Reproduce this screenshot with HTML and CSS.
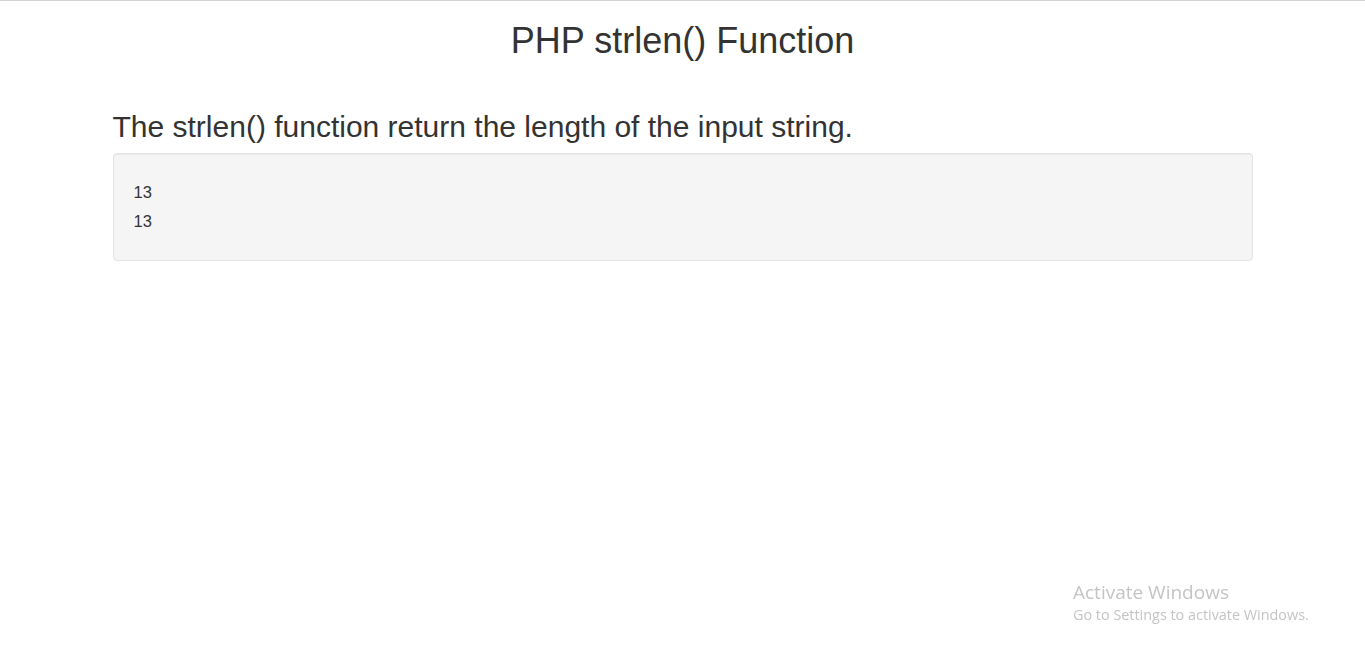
FILE: index.html
```html
<!DOCTYPE html>
<html>
<head>
<meta charset="utf-8">
<title>PHP strlen() Function</title>
<link rel="stylesheet" href="styles.css">
</head>
<body>
<div class="container">
  <h1 class="title">PHP strlen() Function</h1>
  <h2 class="subtitle">The strlen() function return the length of the input string.</h2>
  <div class="well">
    <div class="output">
      <div class="line">13</div>
      <div class="line">13</div>
    </div>
  </div>
</div>
<div class="watermark">
  <div class="wm-title">Activate Windows</div>
  <div class="wm-sub">Go to Settings to activate Windows.</div>
</div>
</body>
</html>
```
FILE: styles.css
```css
html, body {
  margin: 0;
  padding: 0;
}
body {
  font-family: "Liberation Sans", Arial, sans-serif;
  font-size: 14px;
  line-height: 1.42857;
  color: #333;
  background: #fff;
  border-top: 1px solid #d2d2d2;
  min-height: 656px;
}
.container {
  width: 1140px;
  margin: 0 auto;
  padding: 0 15px;
}
.title {
  font-size: 36px;
  font-weight: 500;
  line-height: 1.1;
  text-align: center;
  margin: 20px 0 0;
}
.subtitle {
  font-size: 30px;
  font-weight: 500;
  line-height: 1.1;
  margin: 49px 0 10px;
}
.well {
  background: #f5f5f5;
  border: 1px solid #e3e3e3;
  border-radius: 4px;
  box-shadow: inset 0 1px 1px rgba(0,0,0,.05);
  padding: 19px 19px 19px 20px;
}
.output {
  padding: 9px 0 10px;
  display: flex;
  flex-direction: column;
  gap: 9px;
}
.line {
  line-height: 20px;
  font-size: 16.5px;
}
.watermark {
  position: fixed;
  left: 1073px;
  top: 580px;
  color: #c4c4c4;
  font-family: "Open Sans", "Noto Sans", sans-serif;
}
.wm-title {
  font-size: 19px;
  line-height: 25px;
}
.wm-sub {
  font-size: 14.4px;
  line-height: 20px;
}
```
